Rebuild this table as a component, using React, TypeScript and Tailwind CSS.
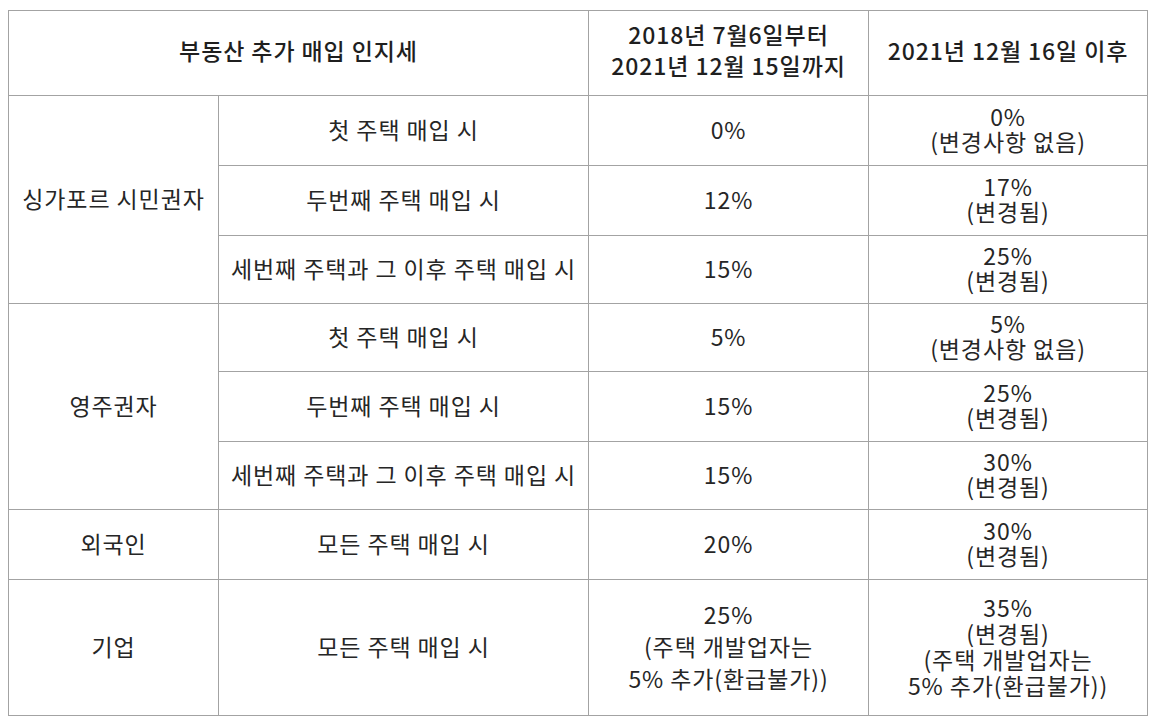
import React from "react";

type Row = { sub: string; before: string[]; after: string[]; h: string; lead?: string; lead4?: string };

const GROUPS: { name: string; rows: Row[] }[] = [
  {
    name: "싱가포르 시민권자",
    rows: [
      { sub: "첫 주택 매입 시", before: ["0%"], after: ["0%", "(변경사항 없음)"], h: "h-[70px]" },
      { sub: "두번째 주택 매입 시", before: ["12%"], after: ["17%", "(변경됨)"], h: "h-[70px]" },
      { sub: "세번째 주택과 그 이후 주택 매입 시", before: ["15%"], after: ["25%", "(변경됨)"], h: "h-[68px]" },
    ],
  },
  {
    name: "영주권자",
    rows: [
      { sub: "첫 주택 매입 시", before: ["5%"], after: ["5%", "(변경사항 없음)"], h: "h-[68px]" },
      { sub: "두번째 주택 매입 시", before: ["15%"], after: ["25%", "(변경됨)"], h: "h-[70px]" },
      { sub: "세번째 주택과 그 이후 주택 매입 시", before: ["15%"], after: ["30%", "(변경됨)"], h: "h-[68px]" },
    ],
  },
  {
    name: "외국인",
    rows: [{ sub: "모든 주택 매입 시", before: ["20%"], after: ["30%", "(변경됨)"], h: "h-[70px]" }],
  },
  {
    name: "기업",
    rows: [
      {
        sub: "모든 주택 매입 시",
        before: ["25%", "(주택 개발업자는", "5% 추가(환급불가))"],
        after: ["35%", "(변경됨)", "(주택 개발업자는", "5% 추가(환급불가))"],
        h: "h-[136px]",
        lead: "leading-[32px]",
        lead4: "leading-[26px]",
      },
    ],
  },
];

const cell = "border border-[#a3a3a3] text-center align-middle p-0";

function Lines({ items }: { items: string[] }) {
  return (
    <>
      {items.map((t, i) => (
        <div key={i}>{t}</div>
      ))}
    </>
  );
}

export default function App() {
  return (
    <div
      className="bg-white min-h-screen pt-[10px] pl-[8px] text-[#262626]"
      style={{ fontFamily: '"Noto Sans CJK KR", "Noto Sans", sans-serif' }}
    >
      <table className="table-fixed border-collapse w-[1139px] text-[23px] leading-[25px] tracking-[0.9px]">
        <colgroup>
          <col className="w-[210px]" />
          <col className="w-[370px]" />
          <col className="w-[280px]" />
          <col className="w-[279px]" />
        </colgroup>
        <thead>
          <tr className="h-[85px] leading-[31px] text-[#1f1f1f]">
            <th colSpan={2} className={`${cell} font-medium pb-[6px]`}>
              부동산 추가 매입 인지세
            </th>
            <th className={`${cell} font-medium pb-[6px]`}>
              <div>2018년 7월6일부터</div>
              <div>2021년 12월 15일까지</div>
            </th>
            <th className={`${cell} font-medium pb-[6px]`}>2021년 12월 16일 이후</th>
          </tr>
        </thead>
        <tbody>
          {GROUPS.map((g) =>
            g.rows.map((r, i) => (
              <tr key={g.name + i} className={r.h}>
                {i === 0 && (
                  <td rowSpan={g.rows.length} className={`${cell} pb-[3px]`}>
                    {g.name}
                  </td>
                )}
                <td className={`${cell} pb-[3px]`}>{r.sub}</td>
                <td className={`${cell} pb-[3px] ${r.lead ?? ""}`}>
                  <Lines items={r.before} />
                </td>
                <td className={`${cell} pb-[3px] ${r.lead4 ?? ""}`}>
                  <Lines items={r.after} />
                </td>
              </tr>
            ))
          )}
        </tbody>
      </table>
    </div>
  );
}
